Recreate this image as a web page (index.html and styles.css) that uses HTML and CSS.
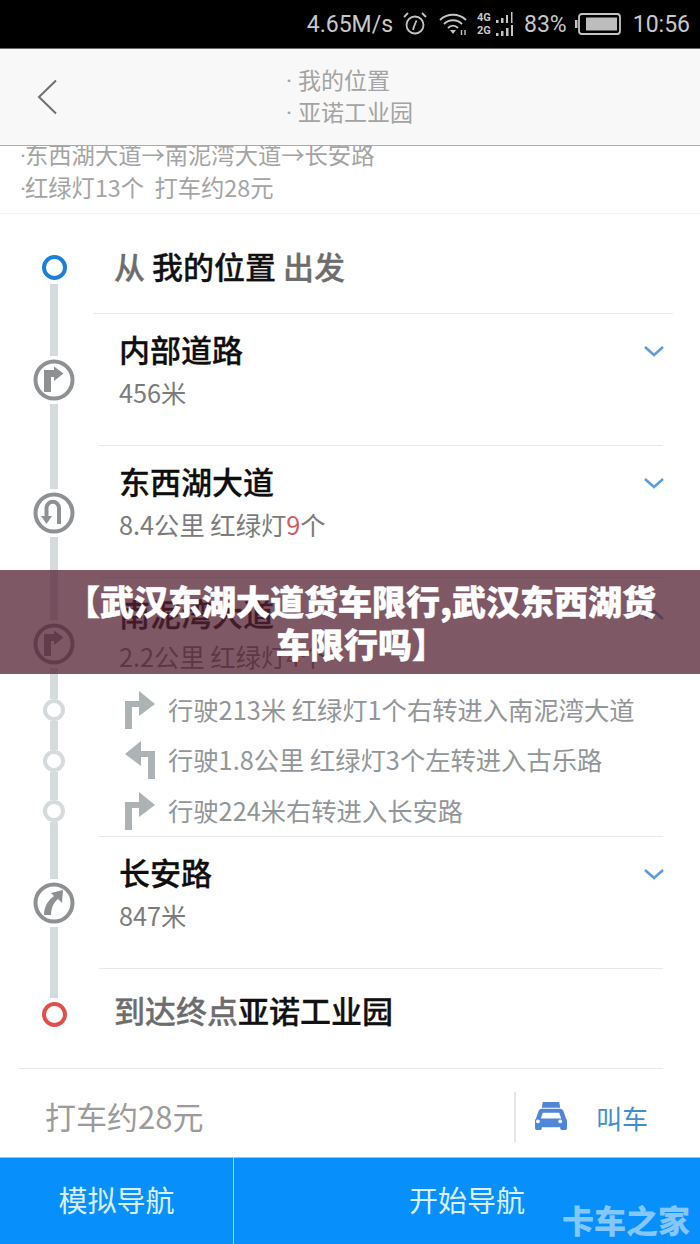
FILE: index.html
```html
<!DOCTYPE html>
<html lang="zh">
<head>
<meta charset="utf-8">
<title>路线详情</title>
<link rel="stylesheet" href="styles.css">
</head>
<body>
<div class="phone">
  <div class="status">
    <span class="st-speed">4.65M/s</span>
    <svg class="st-alarm" width="26" height="26" viewBox="0 0 26 26" fill="none" stroke="#c4c4c4" stroke-width="1.8"><circle cx="13" cy="14" r="8.5"/><path d="M14.5 9.5L12 15.5 11 19"/><path d="M2 6l4-4M24 6l-4-4"/></svg>
    <svg class="st-wifi" width="30" height="24" viewBox="0 0 30 24" fill="none" stroke="#c4c4c4" stroke-width="1.8"><path d="M1 8C8 1 20 1 27 8"/><path d="M5 12C10 7 18 7 23 12"/><path d="M9 16C12 13 16 13 19 16"/><path d="M11 18h6l-3 4z" fill="#c4c4c4" stroke="none"/><path d="M22.500 23v-5M26 23v-5" stroke-width="1.4"/></svg>
    <div class="st-net">
      <div class="st-net-row"><span>4G</span><svg width="20" height="11" viewBox="0 0 20 11" fill="#c4c4c4"><rect x="1" y="8" width="2.500" height="3"/><rect x="6" y="6" width="2.500" height="5"/><rect x="11" y="3" width="2" height="8"/><rect x="16" y="0" width="1.500" height="11"/></svg></div>
      <div class="st-net-row"><span>2G</span><svg width="20" height="11" viewBox="0 0 20 11" fill="#c4c4c4"><rect x="1" y="8" width="2.500" height="3"/><rect x="6" y="6" width="2.500" height="5"/><rect x="11" y="3" width="2.500" height="8"/><rect x="16" y="0" width="2" height="11"/></svg></div>
    </div>
    <span class="st-pct">83%</span>
    <svg class="st-batt" width="46" height="22" viewBox="0 0 46 22"><rect x="0" y="7" width="2.500" height="8" fill="#c4c4c4"/><rect x="4" y="1" width="41" height="20" rx="3" fill="none" stroke="#c4c4c4" stroke-width="1.800"/><rect x="11" y="4.500" width="31" height="13" fill="#bdbdbd"/></svg>
    <span class="st-time">10:56</span>
  </div>

  <header class="topbar">
    <svg class="back" width="24" height="40" viewBox="0 0 24 40" fill="none" stroke="#6f6f6f" stroke-width="2"><path d="M20 3.500L3 20l17 16.500"/></svg>
    <div class="places">
      <div><span class="dot">·</span>我的位置</div>
      <div><span class="dot">·</span>亚诺工业园</div>
    </div>
  </header>

  <section class="summary">
    <div class="sum-one"><span class="dot-tight">·</span>东西湖大道→南泥湾大道→长安路</div>
    <div class="sum-two"><span class="dot-tight">·</span>红绿灯13个&nbsp;&nbsp;打车约28元</div>
  </section>

  <main class="route">
    <div class="row row-start">
      <div class="rail"><span class="ring ring-blue"></span><span class="seg"></span></div>
      <div class="terminal">从 <b>我的位置</b> 出发</div>
    </div>

    <div class="row row-step line-first">
      <div class="rail">
        <span class="seg seg-step"></span>
        <svg class="man" viewBox="0 0 42 42"><circle cx="21" cy="21" r="18.500" fill="#fff" stroke="#8d9193" stroke-width="4"/><path d="M11 33V11h10V7.500l9.500 7L21 22v-4h-3v15z" fill="#8d9193"/></svg>
        <span class="seg"></span>
      </div>
      <div class="step-text">
        <div class="name">内部道路</div>
        <div class="meta">456米</div>
      </div>
      <svg class="chev" width="22" height="12" viewBox="0 0 22 12" fill="none" stroke="#5a9be0" stroke-width="2.500"><path d="M2 2l9 8 9-8"/></svg>
    </div>

    <div class="row row-step row-second">
      <div class="rail">
        <span class="seg seg-step"></span>
        <svg class="man" viewBox="0 0 42 42"><circle cx="21" cy="21" r="18.500" fill="#fff" stroke="#8d9193" stroke-width="4"/><path d="M13.500 24v-8a6.250 6.250 0 0 1 12.500 0v16" fill="none" stroke="#8d9193" stroke-width="4"/><path d="M8 24h11l-5.500 8z" fill="#8d9193"/></svg>
        <span class="seg"></span>
      </div>
      <div class="step-text">
        <div class="name">东西湖大道</div>
        <div class="meta">8.4公里 红绿灯<em>9</em>个</div>
      </div>
      <svg class="chev" width="22" height="12" viewBox="0 0 22 12" fill="none" stroke="#5a9be0" stroke-width="2.500"><path d="M2 2l9 8 9-8"/></svg>
    </div>

    <div class="row row-head">
      <div class="rail">
        <span class="seg seg-step"></span>
        <svg class="man" viewBox="0 0 42 42"><circle cx="21" cy="21" r="18.500" fill="#fff" stroke="#8d9193" stroke-width="4"/><path d="M11 33V11h10V7.500l9.500 7L21 22v-4h-3v15z" fill="#8d9193"/></svg>
        <span class="seg"></span>
      </div>
      <div class="step-text">
        <div class="name">南泥湾大道</div>
        <div class="meta">2.2公里 红绿灯<em>4</em>个</div>
      </div>
      <svg class="chev" width="22" height="12" viewBox="0 0 22 12" fill="none" stroke="#5a9be0" stroke-width="2.500"><path d="M2 10l9-8 9 8"/></svg>
    </div>

    <div class="row row-turn">
      <div class="rail"><span class="seg"></span><span class="ring ring-small"></span><span class="seg"></span></div>
      <svg class="turn" width="32" height="38" viewBox="0 0 32 38" fill="#adb2b5"><path d="M1 38V10h14V0l16 13-16 12v-9H8v22z"/></svg>
      <div class="turn-text">行驶213米 红绿灯1个右转进入南泥湾大道</div>
    </div>
    <div class="row row-turn">
      <div class="rail"><span class="seg"></span><span class="ring ring-small"></span><span class="seg"></span></div>
      <svg class="turn" width="32" height="38" viewBox="0 0 32 38" fill="#adb2b5"><path d="M31 38V10H17V0L1 13l16 12v-9h7v22z"/></svg>
      <div class="turn-text">行驶1.8公里 红绿灯3个左转进入古乐路</div>
    </div>
    <div class="row row-turn">
      <div class="rail"><span class="seg"></span><span class="ring ring-small"></span><span class="seg"></span></div>
      <svg class="turn" width="32" height="38" viewBox="0 0 32 38" fill="#adb2b5"><path d="M1 38V10h14V0l16 13-16 12v-9H8v22z"/></svg>
      <div class="turn-text">行驶224米右转进入长安路</div>
    </div>

    <div class="row row-step row-fourth">
      <div class="rail">
        <span class="seg seg-step"></span>
        <svg class="man" viewBox="0 0 42 42"><circle cx="21" cy="21" r="18.500" fill="#fff" stroke="#8d9193" stroke-width="4"/><path d="M11 33c0-8 4-15 10-19l-3-3 12-3-1 13-4-4c-4 3-7 9-7 16z" fill="#8d9193"/></svg>
        <span class="seg"></span>
      </div>
      <div class="step-text">
        <div class="name">长安路</div>
        <div class="meta">847米</div>
      </div>
      <svg class="chev" width="22" height="12" viewBox="0 0 22 12" fill="none" stroke="#5a9be0" stroke-width="2.500"><path d="M2 2l9 8 9-8"/></svg>
    </div>

    <div class="row row-end">
      <div class="rail"><span class="seg"></span><span class="ring ring-red"></span></div>
      <div class="terminal terminal-end">到达终点<b>亚诺工业园</b></div>
    </div>
  </main>

  <section class="taxi">
    <div class="taxi-price">打车约28元</div>
    <div class="taxi-call">
      <svg width="32" height="30" viewBox="0 0 33 31" fill="#4f86d8"><path d="M8 0h17l1 6H7z"/><path fill-rule="evenodd" d="M7 7h19c1.500 0 3 1 4 4l2 6c1 1 1 2 1 3v7c0 1-1 2-2 2h-3c-1 0-2-1-2-2v-1H7v1c0 1-1 2-2 2H2c-1 0-2-1-2-2v-7c0-1 0-2 1-3l2-6c1-3 2.500-4 4-4zm1 4l-2 6h21l-2-6zM5 20a2 2 0 1 0 0 .1zm23 0a2 2 0 1 0 0 .1z"/></svg>
      <span>叫车</span>
    </div>
  </section>

  <footer class="actions">
    <div class="act act-sim">模拟导航</div>
    <div class="act act-go">开始导航</div>
  </footer>

  <div class="banner">【武汉东湖大道货车限行,武汉东西湖货车限行吗】</div>
  <div class="mark">卡车之家</div>
</div>
</body>
</html>
```

FILE: styles.css
```css
* { box-sizing: border-box; }
html, body { margin: 0; padding: 0; background: #fff; }
body { font-family: "Noto Sans CJK SC", "Noto Sans", sans-serif; }
.phone { position: relative; width: 700px; height: 1244px; overflow: hidden; background: #fff; display: flex; flex-direction: column; }

.status { height: 48px; background: #000; color: #c8c8c8; display: flex; align-items: center; justify-content: flex-end; padding-right: 10px; font-family: Roboto, sans-serif; font-size: 23px; flex: none; }
.st-speed { margin-right: 9px; }
.st-alarm { margin-right: 11px; }
.st-wifi { margin-right: 8px; }
.st-net { display: flex; flex-direction: column; gap: 2px; width: 40px; margin-right: 7px; }
.st-net-row { display: flex; align-items: center; gap: 3px; height: 11px; }
.st-net-row span { font-size: 11px; font-weight: 700; width: 15px; line-height: 11px; }
.st-pct { margin-right: 8px; }
.st-batt { margin-right: 12px; }

.topbar { height: 98px; flex: none; background: #f8f8f8; border-top: 1px solid #6a6a6a; border-bottom: 1px solid #a9a9a9; display: flex; align-items: center; padding-left: 36px; }
.back { flex: none; }
.places { margin-left: 226px; margin-top: -4px; font-size: 23px; line-height: 32px; color: #a3a3a3; }
.dot { display: inline-block; width: 12px; line-height: 1; font-family: Roboto, sans-serif; }
.dot-tight { display: inline-block; width: 5px; line-height: 1; font-family: Roboto, sans-serif; }

.summary { height: 68px; flex: none; border-bottom: 1px solid #f2f2f2; padding-left: 20px; color: #a4a4a4; font-size: 23.300px; overflow: hidden; }
.sum-one { line-height: 32px; margin-top: -8px; }
.sum-two { line-height: 34px; }

.route { display: flex; flex-direction: column; flex: none; }
.row { display: flex; position: relative; }
.rail { width: 108px; flex: none; display: flex; flex-direction: column; align-items: center; margin-right: 11px; }
.seg { width: 8px; flex: 1; background: #d5dadc; }
.seg-step { flex: none; height: 43px; }
.row-second .seg-step { height: 44px; }
.ring { flex: none; border-radius: 50%; display: block; background: #fff; }
.ring-blue { width: 25px; height: 25px; border: 4px solid #1b80d6; margin: 41px 0 4px; }
.ring-red { width: 25px; height: 25px; border: 4px solid #df4f4c; margin: 4px 0 41px; }
.ring-small { width: 22px; height: 22px; border: 4px solid #d5dadc; }
.man { width: 42px; height: 42px; flex: none; margin: 3px 0; }

.row-start { height: 99px; }
.row-step { height: 132px; }
.row-head { height: 108px; }
.row-turn { height: 50.330px; align-items: stretch; }
.row-end { height: 100px; }

.row-second::before, .row-head::before, .row-fourth::before, .row-end::before { content: ""; position: absolute; top: 0; left: 99px; width: 564px; height: 1px; background: #e8e8e8; }
.line-first::before { content: ""; position: absolute; top: 0; left: 93px; width: 580px; height: 1px; background: #e8e8e8; }

.terminal { font-size: 31px; line-height: 40px; color: #6d6d6d; font-weight: 500; margin: 32px 0 0 -5px; -webkit-text-stroke: 0.3px currentColor; }
.terminal-end { margin-top: 22px; }
.terminal b { color: #111; font-weight: 500; }
.step-text { flex: 1; padding-top: 15px; }
.name { font-size: 31px; line-height: 42px; font-weight: 500; color: #0e0e0e; -webkit-text-stroke: 0.3px currentColor; }
.meta { font-size: 25.300px; line-height: 36px; color: #7b7b7b; margin-top: 4px; }
.meta em { font-style: normal; color: #d05a68; }
.chev { position: absolute; top: 32px; left: 643px; }

.row-turn .turn { flex: none; margin: 6px 12px 0 5px; }
.turn-text { font-size: 25.300px; line-height: 48px; color: #929699; white-space: nowrap; }

.taxi { height: 89px; flex: none; border-top: 1px solid #e8e8e8; margin: 0 37px 0 18px; padding-top: 9px; display: flex; align-items: center; }
.taxi-price { flex: 1; font-size: 31px; color: #9b9b9b; padding: 0 0 3px 27px; }
.taxi-call { height: 50px; width: 149px; border-left: 2px solid #e6e6e6; display: flex; align-items: center; padding-left: 19px; gap: 29px; color: #3f8fcc; font-size: 26px; }

.actions { flex: 1; display: flex; background: #0790fb; color: #d9f0ff; font-size: 29px; border-top: 1px solid #8cc8f5; }
.act { display: flex; align-items: center; justify-content: center; padding-bottom: 4px; }
.act-sim { width: 234px; border-right: 1px solid #9fd3fb; }
.act-go { width: 466px; }

.banner { position: absolute; left: 0; top: 570px; width: 700px; height: 104px; padding: 9px 40px 0 62px; background: rgba(84, 32, 51, 0.75); color: #fff; font-size: 34px; line-height: 43px; font-weight: 900; -webkit-text-stroke: 0.5px #fff; text-align: center; }
.mark { position: absolute; left: 562px; top: 1197px; font-size: 32px; line-height: 44px; font-weight: 900; color: rgba(255, 255, 255, 0.5); white-space: nowrap; }
```
